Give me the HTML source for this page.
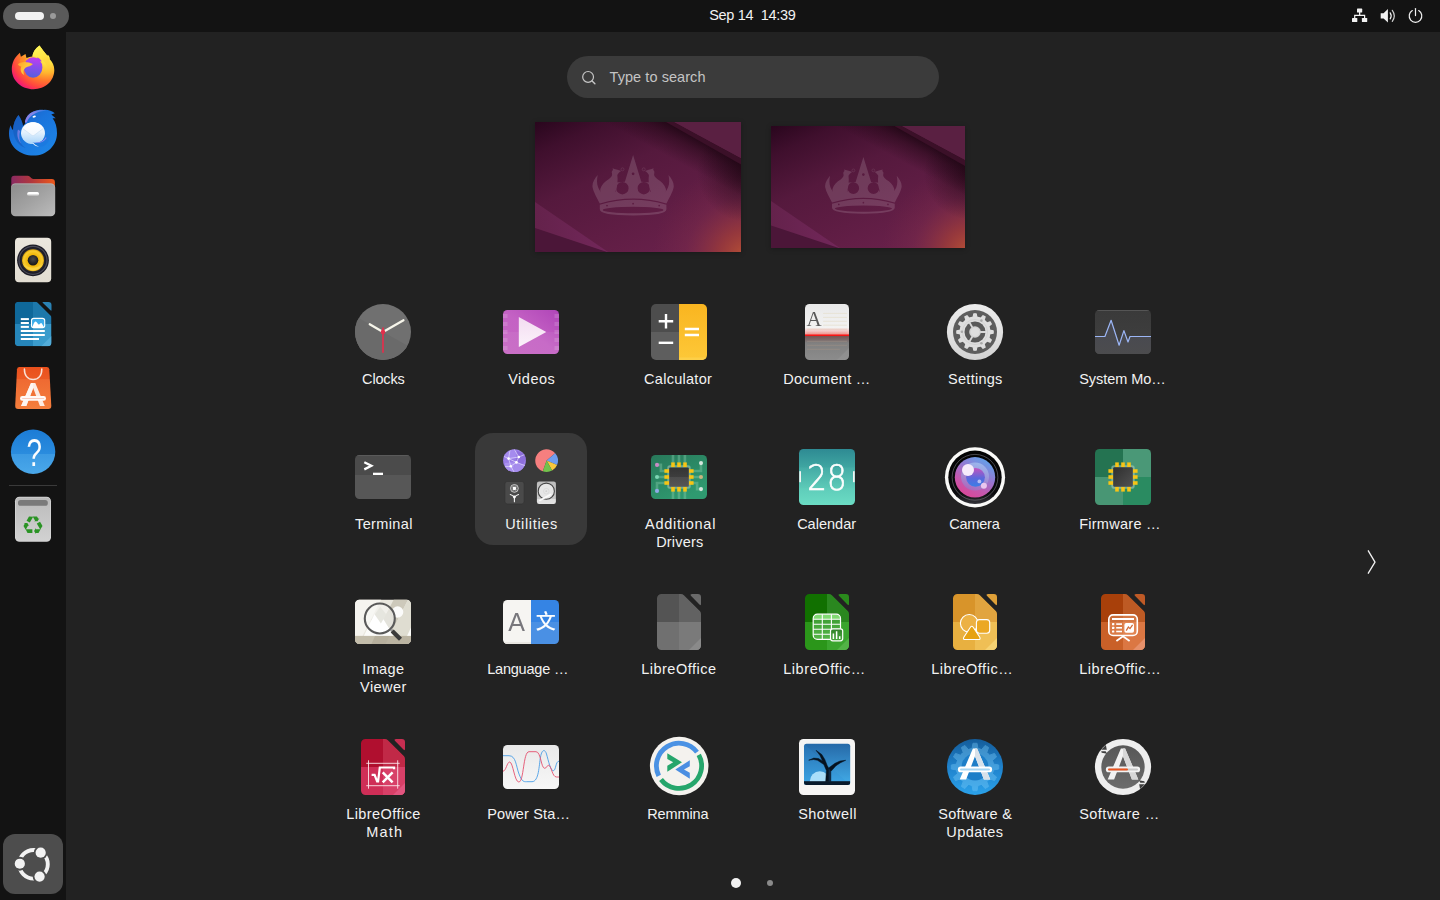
<!DOCTYPE html>
<html lang="en"><head><meta charset="utf-8"><title>Activities</title>
<style>
*{margin:0;padding:0;box-sizing:border-box}
html,body{width:1440px;height:900px;overflow:hidden;background:#222222;font-family:"Liberation Sans","DejaVu Sans",sans-serif;color:#f2f2f2}
#top{position:absolute;left:0;top:0;width:1440px;height:32px;background:#131313}
#dock{position:absolute;left:0;top:32px;width:66px;height:868px;background:#131313}
#act{position:absolute;left:3px;top:3px;width:66px;height:26px;border-radius:13px;background:#5a5a5a}
#act i{position:absolute;left:12px;top:9px;width:29px;height:8px;border-radius:4px;background:#f2f2f2}
#act b{position:absolute;left:47px;top:10px;width:6px;height:6px;border-radius:3px;background:#9a9a9a}
#search{position:absolute;left:567px;top:56px;width:372px;height:42px;border-radius:21px;background:#3b3b3b}
#search svg{position:absolute;left:13px;top:12px}
.ws{position:absolute;overflow:hidden;box-shadow:0 1px 5px rgba(0,0,0,.28)}
.ws svg{display:block}
.ic{position:absolute;width:64px;height:64px}
.ic svg{display:block}
.t{position:absolute;font-size:14.5px;line-height:18px;height:18px;color:#f2f2f2;white-space:pre}
#t_searchtxt{color:#c4c4c4}
#folder{position:absolute;left:475px;top:433px;width:112px;height:112px;border-radius:18px;background:#393939}
.dk{position:absolute;left:9px;width:48px;height:48px}
.dk svg{display:block}
#sep{position:absolute;left:9px;top:485px;width:48px;height:1px;background:#3a3a3a}
#apps{position:absolute;left:3px;top:834px;width:60px;height:60px;border-radius:12px;background:#4d4d4d}
#apps svg{position:absolute;left:0;top:0}
#chev{position:absolute;left:1360px;top:546px}
.dot{position:absolute;border-radius:50%}
.st{position:absolute;top:0}
</style></head>
<body>
<div id="top"><div id="act"><i></i><b></b></div>
<svg class="st" style="left:1340px" width="100" height="32" viewBox="1340 0 100 32">
<g fill="#f2f2f2"><rect x="1357" y="8.600" width="5.200" height="4" rx=".6"/><rect x="1352" y="17.900" width="5.300" height="4.200" rx=".6"/><rect x="1361.900" y="17.900" width="5.300" height="4.200" rx=".6"/>
<path d="M1359 12 H1360.300 V14.700 H1365.200 V18.500 H1364 V15.900 H1355.300 V18.500 H1354.100 V14.700 H1359Z"/>
<path d="M1380.700 13.300 H1383.600 L1387.900 9 V22.500 L1383.600 18.400 H1380.700Z"/></g>
<g fill="none" stroke="#f2f2f2" stroke-width="1.200" stroke-linecap="round"><path d="M1390.200 12.800 Q1392.200 15.800 1390.200 18.800"/><path d="M1392.300 10.300 Q1396.300 15.800 1392.300 21.300" opacity=".85"/>
<path d="M1412.300 10.600 A6.300 6.300 0 1 0 1418.700 10.600"/><path d="M1415.500 8.600 V15.600"/></g>
</svg></div>
<div id="dock">
<div class="dk" style="top:12px"><svg width="48" height="48" viewBox="0 0 48 48">
<defs>
<radialGradient id="ffa" gradientUnits="userSpaceOnUse" cx="38" cy="9" r="44"><stop offset="0" stop-color="#fff654"/><stop offset="0.25" stop-color="#ffe040"/><stop offset="0.45" stop-color="#ffb62e"/><stop offset="0.62" stop-color="#ff7a2c"/><stop offset="0.8" stop-color="#ff4440"/><stop offset="0.92" stop-color="#f4206c"/><stop offset="1" stop-color="#e01492"/></radialGradient>
<linearGradient id="ffb" x1="0.5" y1="0" x2="0.4" y2="1"><stop offset="0" stop-color="#c43cf0"/><stop offset="0.45" stop-color="#8a4cec"/><stop offset="1" stop-color="#5560dc"/></linearGradient>
<linearGradient id="ffc" x1="0" y1="0" x2="1" y2="0.6"><stop offset="0" stop-color="#ffa02a"/><stop offset="0.6" stop-color="#ffc83a"/><stop offset="1" stop-color="#ffb030"/></linearGradient>
<linearGradient id="ffd" x1="0.3" y1="0" x2="0.7" y2="1"><stop offset="0" stop-color="#fff85a"/><stop offset="0.5" stop-color="#ffe444"/><stop offset="1" stop-color="#ffb02e" stop-opacity="0"/></linearGradient>
</defs>
<path d="M30.500 1.600 C33 5 35.500 8.500 38.300 11.800 L38.900 10.800 C40.500 12.500 41 14 40.800 15.200 C43.500 18 45.300 21.500 45.300 26 C45.300 37 36 45.200 24.500 45.200 C12.500 45.200 2.800 36.500 2.800 25.200 C2.800 18.500 5.800 13.200 10.900 8.800 L11.900 12.800 L16.500 10 L17.500 14 C19.500 13.200 21.500 12.700 23.400 12.600 C23.600 8.800 26 4.800 30.500 1.600Z" fill="url(#ffa)"/>
<path d="M30.500 1.600 C33 5 35.500 8.500 38.300 11.800 C41 16 42 21 40 27 C38 21 35 16 29 13.300 C27 12.700 25 12.500 23.400 12.600 C23.600 8.800 26 4.800 30.500 1.600Z" fill="url(#ffd)"/>
<ellipse cx="24.100" cy="23.500" rx="9.300" ry="10.200" fill="url(#ffb)"/>
<path d="M28 13.600 C30.300 14.200 32 15.700 32.800 17.600 C31.500 17 30.200 17 29 17.500Z" fill="#b040ee"/>
<path d="M8.800 20.200 C12 17.300 19 17.200 23.800 20 C22.500 22.300 19 22.200 16.500 23.800 C14.200 25.500 14 28.500 15.300 31.200 C12 29.500 10.800 25.500 12.300 22.600 C10.800 22.100 9.500 21.300 8.800 20.200Z" fill="url(#ffc)"/>
<path d="M12.300 13.800 C14 13.200 16 13.300 17.500 14 C16.300 15 15.500 16.300 15.200 17.500 C13.500 17.300 12 17.700 10.500 18.500 C10.800 16.500 11.300 15 12.300 13.800Z" fill="#ff8a28" opacity=".6"/>
</svg></div>
<div class="dk" style="top:76px"><svg width="48" height="48" viewBox="0 0 48 48">
<defs>
<linearGradient id="tba" x1="0.1" y1="0.1" x2="0.8" y2="0.95"><stop offset="0" stop-color="#1a62c8"/><stop offset="0.4" stop-color="#1a74dc"/><stop offset="1" stop-color="#1d84e6"/></linearGradient>
<linearGradient id="tbb" x1="0" y1="0" x2="0" y2="1"><stop offset="0" stop-color="#ffffff"/><stop offset="0.45" stop-color="#e4f1fd"/><stop offset="1" stop-color="#a9d4f8"/></linearGradient>
<linearGradient id="tbc" x1="0" y1="1" x2="1" y2="0"><stop offset="0" stop-color="#8f7ee6"/><stop offset="0.6" stop-color="#7f86ea"/><stop offset="1" stop-color="#2a7ae0"/></linearGradient>
<linearGradient id="tbd" x1="0" y1="0" x2="0" y2="1"><stop offset="0" stop-color="#ffffff"/><stop offset="1" stop-color="#f2f8fe"/></linearGradient>
</defs>
<path d="M34.600 1.900 C39 1.500 43 3 45.800 5.300 L42.300 6.600 L46.700 10.300 L43.600 10.200 C46.500 14 48 19 48 25 C48 38 37.500 47.600 24.500 47.600 C11 47.600 0 38.500 0 25.500 C0 22 0.600 19.500 1.600 17.200 C2.300 19.500 3 21 4 22 C4.200 16 6.200 10.800 9.400 6.900 C12 10.500 13.500 14 14 18 L16.500 15 L15.900 13.400 C17 9 20 5.500 23.400 4 C27 2.200 31 1.700 34.600 1.900Z" fill="url(#tba)"/>
<path d="M15.900 13.400 C17 9 20 5.500 24 3.800 C28 2 33 1.600 38 2.500 C33 2.900 28.500 4 25.500 5.800 C21.500 8 19 10.800 17.800 14.200 L16.500 15Z" fill="url(#tbc)"/>
<path d="M4 22 C4.200 16 6.200 10.800 9.400 6.900 C12 10.500 13.500 14 14 18 C11 21 9.500 25 10 29.500 C10.500 34 13 37.500 16.500 40 C10 38 5 32 4 22Z" fill="#1558b8" opacity=".55"/>
<path d="M9 21.500 C7.500 26 8.500 31.500 12 35.500 C10 31.500 9.800 27 11.200 23 C10.300 22.600 9.600 22.100 9 21.500Z" fill="#8a86ea" opacity=".75"/>
<ellipse cx="24" cy="25.200" rx="12" ry="10.900" fill="url(#tbb)"/>
<path d="M13.400 20.300 C15.500 16.500 19.500 14.300 24 14.300 C28.500 14.300 32.500 16.500 34.600 20.300 L25 27.400 Q24 28.100 23 27.400Z" fill="url(#tbd)"/>
<path d="M13.400 20.300 L23 27.400 Q24 28.100 25 27.400 L34.600 20.300" fill="none" stroke="#c4dcf4" stroke-width="0.700" opacity=".9"/>
<path d="M37.500 26 C37 31.500 31.500 35.800 23.400 34.500 C26.500 36.500 29.500 38 30.500 38.800 C37 38.500 41.500 33 41 26Z" fill="#1b7ae0"/>
<path d="M36.800 29 C35 33 30 35.400 23.600 34.500 C29.500 36.300 35.300 34 37.500 30Z" fill="#8f88ee"/>
<path d="M23.400 34.500 C26 36.800 28.500 38 30 38.600 C27.500 38.800 24.500 37.500 23.400 34.500Z" fill="#f4f9ff"/>
<ellipse cx="25.200" cy="8.600" rx="1.700" ry="1" fill="#ffffff" transform="rotate(-15 25.200 8.600)"/>
</svg></div>
<div class="dk" style="top:140px"><svg width="48" height="48" viewBox="0 0 48 48">
<defs><linearGradient id="fla" x1="0" y1="0" x2="1" y2="0"><stop offset="0" stop-color="#8a2a62"/><stop offset="0.45" stop-color="#b0363e"/><stop offset="1" stop-color="#ee5a1c"/></linearGradient>
<linearGradient id="flb" x1="0" y1="0" x2="1" y2="1"><stop offset="0" stop-color="#8c8c8c"/><stop offset="0.5" stop-color="#a2a2a2"/><stop offset="1" stop-color="#bcbcbc"/></linearGradient></defs>
<path d="M5.300 3.800 H18.500 Q20 3.800 21 4.800 L22.500 6.300 Q23.300 7 24.500 7 H42.700 Q45.900 7 45.900 10.200 V30 H2.300 V6.800 Q2.300 3.800 5.300 3.800Z" fill="url(#fla)"/>
<rect x="2" y="11.600" width="44.200" height="32.700" rx="4.300" fill="url(#flb)"/>
<path d="M2 15.900 A4.300 4.300 0 0 1 6.300 11.600 H41.900 A4.300 4.300 0 0 1 46.200 15.900 V16.600 A4.300 4.300 0 0 0 41.900 12.300 H6.300 A4.300 4.300 0 0 0 2 16.600Z" fill="#c4c4c4" opacity=".7"/>
<rect x="18.200" y="20" width="11.800" height="3.300" rx="1.650" fill="#ffffff"/>
<rect x="18.200" y="22.300" width="11.800" height="1" rx=".5" fill="#d8d8d8"/>
</svg></div>
<div class="dk" style="top:204px"><svg width="48" height="48" viewBox="0 0 48 48">
<defs><radialGradient id="rba" cx="0.5" cy="0.5" r="0.5"><stop offset="0" stop-color="#f0b400"/><stop offset="0.55" stop-color="#f2b90c"/><stop offset="0.85" stop-color="#f8cc30"/><stop offset="1" stop-color="#d89e08"/></radialGradient>
<radialGradient id="rbb" cx="0.5" cy="0.4" r="0.6"><stop offset="0" stop-color="#4a4a4a"/><stop offset="1" stop-color="#141414"/></radialGradient>
<linearGradient id="rbc" x1="0" y1="0" x2="0" y2="1"><stop offset="0" stop-color="#ebe7de"/><stop offset="1" stop-color="#e2ddd2"/></linearGradient></defs>
<rect x="6" y="1.800" width="36.200" height="44.500" rx="4" fill="url(#rbc)"/>
<circle cx="24" cy="24.300" r="15.900" fill="#1c1c26"/>
<circle cx="24" cy="24.300" r="14" fill="none" stroke="#4a4a58" stroke-width="1.200"/>
<circle cx="24" cy="24.300" r="12.200" fill="#26262e"/>
<circle cx="24" cy="24.300" r="11" fill="url(#rba)"/>
<path d="M13.500 27 A11 11 0 0 0 34.500 27 A12 9 0 0 1 13.500 27Z" fill="#fbd84a" opacity=".7"/>
<circle cx="24" cy="24.300" r="5.300" fill="url(#rbb)"/>
</svg></div>
<div class="dk" style="top:268px"><svg width="48" height="48" viewBox="0 0 48 48">
<defs><clipPath id="wrc"><path d="M9.800 1.800 H26.300 Q27.700 1.800 28.700 2.800 L41.500 15.600 Q42.500 16.600 42.500 18 V42.300 A4 4 0 0 1 38.500 46.300 H9.800 A4 4 0 0 1 5.800 42.300 V5.800 A4 4 0 0 1 9.800 1.800Z"/></clipPath>
<linearGradient id="wri" x1="0" y1="0" x2="0" y2="1"><stop offset="0" stop-color="#38a8e6"/><stop offset="1" stop-color="#45b4ee"/></linearGradient></defs>
<g clip-path="url(#wrc)"><rect x="5.800" y="1.800" width="18.200" height="22.200" fill="#0f689a"/><rect x="24" y="1.800" width="18.500" height="22.200" fill="#1d78ab"/><rect x="5.800" y="24" width="18.200" height="22.300" fill="#2686ba"/><rect x="24" y="24" width="18.500" height="22.300" fill="#3b9ccc"/><path d="M42.500 36 V46.300 H32.200Z" fill="#52acd8"/></g>
<path d="M34.300 1.900 H39.500 A3 3 0 0 1 42.500 4.900 V9.800 Q42.500 11.300 41.500 10.300 L33.700 2.700 Q32.900 1.900 34.300 1.900Z" fill="#2a82b4"/>
<g fill="#ffffff"><rect x="11.800" y="18.100" width="8.100" height="2"/><rect x="11.800" y="22" width="8.100" height="2"/><rect x="11.800" y="25.900" width="8.100" height="2"/><rect x="11.800" y="30" width="24" height="2"/><rect x="11.800" y="34" width="24" height="2"/><rect x="11.800" y="38" width="18.200" height="2"/></g>
<rect x="22.500" y="18.400" width="13.200" height="9.200" rx="2.200" fill="url(#wri)" stroke="#ffffff" stroke-width="1.100"/>
<path d="M23.300 27.300 L24.500 24 Q25.800 21.500 26.600 21.600 Q27.500 21.700 28.500 23.300 Q29.300 24.700 29.900 24.600 Q30.600 24.500 31.200 23.500 Q32 22.600 32.600 23.300 Q33.500 24.300 34.900 27.300Z" fill="#ffffff"/>
</svg></div>
<div class="dk" style="top:332px"><svg width="48" height="48" viewBox="0 0 48 48">
<defs><linearGradient id="aca" x1="0" y1="0" x2="0" y2="1"><stop offset="0" stop-color="#e9501c"/><stop offset="0.29" stop-color="#ec5a24"/><stop offset="0.3" stop-color="#ef6a32"/><stop offset="1" stop-color="#f47e3c"/></linearGradient></defs>
<path d="M10.500 3 H37.700 Q40 3 40.300 5.300 L42.300 41.700 Q42.400 44.900 39.300 44.900 H9.200 Q6.100 44.900 6.200 41.700 L8 5.300 Q8.200 3 10.500 3Z" fill="url(#aca)"/>
<path d="M15.400 4.900 C15.400 11.800 19 15.500 24.100 15.500 C29.200 15.500 32.800 11.800 32.800 4.900" fill="none" stroke="#f9e2d7" stroke-width="1.500" stroke-linecap="round"/>
<path d="M22 19.100 H26.300 L35.800 41.900 H30.900 L24.200 24 L17.300 41.900 H12.100Z" fill="#fcebe2"/>
<path d="M22 19.100 H24.200 V24 L17.300 41.900 H12.100Z" fill="#fef6f2"/>
<rect x="11" y="32.100" width="26" height="4.600" rx="2.300" fill="#fffaf7"/>
<rect x="13" y="33.900" width="22.300" height="0.900" rx=".45" fill="#f7bfae"/>
</svg></div>
<div class="dk" style="top:396px"><svg width="48" height="48" viewBox="0 0 48 48">
<defs><linearGradient id="hpa" x1="0" y1="0" x2="0" y2="1"><stop offset="0" stop-color="#1c7cd6"/><stop offset="0.545" stop-color="#2a8cde"/><stop offset="0.555" stop-color="#3c9ae3"/><stop offset="1" stop-color="#4aa8ea"/></linearGradient></defs>
<circle cx="24.100" cy="23.800" r="22.200" fill="url(#hpa)"/>
<text opacity=".99" transform="translate(25.300 38.100) scale(0.72 1)" x="0" y="0" font-family="Liberation Sans,sans-serif" font-size="38.500" fill="#ffffff" text-anchor="middle">?</text>
</svg></div>
<div class="dk" style="top:463px"><svg width="48" height="48" viewBox="0 0 48 48">
<defs><linearGradient id="tra" x1="0" y1="0" x2="0" y2="1"><stop offset="0" stop-color="#bababa"/><stop offset="1" stop-color="#d2d2d2"/></linearGradient></defs>
<rect x="6" y="1.700" width="36" height="45" rx="4.500" fill="#d8d8d8"/>
<rect x="6.700" y="2.400" width="34.600" height="43.600" rx="3.800" fill="url(#tra)"/>
<rect x="9" y="5" width="29.800" height="5.800" rx="2.600" fill="#7a7a7a"/>
<g transform="translate(24 30.100)" fill="#2a9324">
<g id="rcy"><path d="M-7.400 4.050 H-0.600 V7.800 H-5.500Z"/><path d="M1.100 5.900 L2.800 2.800 V4.050 H7.600 L5.500 7.800 H2.800 V9Z"/></g>
<use href="#rcy" transform="rotate(120)"/><use href="#rcy" transform="rotate(240)"/></g>
</svg></div>
<div id="sep" style="top:453px"></div>
</div>
<div id="apps"><svg width="60" height="60" viewBox="0 0 60 60"><defs><mask id="ubm"><rect width="60" height="60" fill="#fff"/><circle cx="37.68" cy="18.63" r="6.900" fill="#000"/><circle cx="36.59" cy="42.57" r="6.900" fill="#000"/><circle cx="16.81" cy="29.73" r="6.900" fill="#000"/></mask></defs><circle cx="30.50" cy="30.30" r="14.30" fill="none" stroke="#f2f2f2" stroke-width="3.900" mask="url(#ubm)"/><circle cx="37.68" cy="18.63" r="5.100" fill="#f2f2f2"/><circle cx="36.59" cy="42.57" r="5.100" fill="#f2f2f2"/><circle cx="16.81" cy="29.73" r="5.100" fill="#f2f2f2"/></svg></div>
<div id="search"><svg width="18" height="18" viewBox="0 0 18 18"><circle cx="8.100" cy="8.900" r="5.400" fill="none" stroke="#c6c6c6" stroke-width="1.200"/><path d="M12.100 12.900 L14.900 15.700" stroke="#c6c6c6" stroke-width="1.400" stroke-linecap="round"/></svg></div>
<div class="ws" style="left:535px;top:122px;width:206px;height:130px"><svg width="206" height="130" viewBox="0 0 206 130" preserveAspectRatio="none">
<defs><linearGradient id="wa1" x1="0" y1="0" x2="0.75" y2="1"><stop offset="0" stop-color="#29061d"/><stop offset="0.16" stop-color="#3f0f2d"/><stop offset="0.42" stop-color="#55193d"/><stop offset="1" stop-color="#69214b"/></linearGradient>
<radialGradient id="wb1" gradientUnits="userSpaceOnUse" cx="212" cy="136" r="95"><stop offset="0" stop-color="#bd5534"/><stop offset="0.3" stop-color="#a23e38" stop-opacity=".75"/><stop offset="0.65" stop-color="#85304a" stop-opacity=".3"/><stop offset="1" stop-color="#7a2846" stop-opacity="0"/></radialGradient>
<linearGradient id="wc1" gradientUnits="userSpaceOnUse" x1="170" y1="21" x2="156" y2="47"><stop offset="0" stop-color="#1e0613" stop-opacity=".85"/><stop offset="0.35" stop-color="#220715" stop-opacity=".5"/><stop offset="1" stop-color="#260818" stop-opacity="0"/></linearGradient>
<radialGradient id="we1" gradientUnits="userSpaceOnUse" cx="212" cy="50" r="50"><stop offset="0" stop-color="#1e0613" stop-opacity=".7"/><stop offset="1" stop-color="#1e0613" stop-opacity="0"/></radialGradient>
<linearGradient id="wd1" x1="0" y1="0" x2="1" y2="0"><stop offset="0" stop-color="#64224b"/><stop offset="1" stop-color="#72275a"/></linearGradient></defs>
<rect width="206" height="130" fill="url(#wa1)"/>
<rect width="206" height="130" fill="url(#wb1)"/>
<path d="M40 0 H139 L206 36.300 V120 H40Z" fill="url(#wc1)"/>
<path d="M139 0 L206 36.300 V110 L150 110Z" fill="url(#we1)"/>
<path d="M131 0 H139 L206 36.300 V42.500Z" fill="#3b1028"/>
<path d="M139 0 H206 V36.300Z" fill="#5a2042"/>
<path d="M0 80 L73 130 H0Z" fill="url(#wd1)"/>
<path d="M0 106 L72 130 H0Z" fill="#4b1638"/>
<g fill="#ffffff" opacity=".14">
<path d="M62.700 53.100 C59.500 57 56.800 61 57.600 65.500 C58.500 70 62 76 64.800 81.500 Q98.100 71.500 131.400 81.500 C134.200 76 137.700 70 138.600 65.500 C139.400 61 136.700 57 133.500 53.100 C134.500 58 134.500 62 133 65.500 C131.500 69 129 72 126.500 73.500 L69.700 73.500 C67 72 64.600 69 63.200 65.500 C61.700 62 61.700 58 62.700 53.100Z"/>
<path fill-rule="evenodd" d="M98.100 32.900 L106.300 59.700 L115 60.500 V74 H81 V60.500 L89.900 59.700Z M93.600 66.200 A6.200 6.200 0 1 0 81.200 66.200 A6.200 6.200 0 1 0 93.600 66.200Z M115 66.200 A6.200 6.200 0 1 0 102.600 66.200 A6.200 6.200 0 1 0 115 66.200Z M99.500 51.800 A1.400 1.400 0 1 0 96.700 51.800 A1.400 1.400 0 1 0 99.500 51.800Z"/>
<g id="nb1"><path d="M86.200 49 L82.500 47.800 L79.500 47 L77.600 46.300 L78 48 C76.800 48.800 76.500 50 77 51.500 C77.500 53.500 76.500 55 74 57 C70 59.500 66.500 62.500 65.300 67 C64.800 70 66 72.500 69 74 H83 C83.500 72.500 82.500 70.500 80.500 69.500 C82.500 65 83 58 82.300 53 C83 51.500 84.500 50 86.200 49Z"/><circle cx="87.500" cy="47.300" r="1.500" fill="none" stroke="#ffffff" stroke-width="0.600"/></g>
<use href="#nb1" transform="translate(196.200 0) scale(-1 1)"/>
<path fill-rule="evenodd" d="M64.800 82.800 Q98.100 72.800 131.400 82.800 L131.400 87.200 Q131.400 93.400 98.100 93.400 Q64.800 93.400 64.800 87.200Z M67.700 88 A30.400 3.300 0 1 0 128.500 88 A30.400 3.300 0 1 0 67.700 88Z M99 81.700 A0.900 0.900 0 1 0 97.200 81.700 A0.900 0.900 0 1 0 99 81.700Z M72.900 83.600 A0.900 0.900 0 1 0 71.100 83.600 A0.900 0.900 0 1 0 72.900 83.600Z M125.100 83.600 A0.900 0.900 0 1 0 123.300 83.600 A0.900 0.900 0 1 0 125.100 83.600Z"/>
</g></svg></div>
<div class="ws" style="left:771px;top:126px;width:194px;height:122px"><svg width="194" height="122" viewBox="0 0 206 130" preserveAspectRatio="none">
<defs><linearGradient id="wa2" x1="0" y1="0" x2="0.75" y2="1"><stop offset="0" stop-color="#29061d"/><stop offset="0.16" stop-color="#3f0f2d"/><stop offset="0.42" stop-color="#55193d"/><stop offset="1" stop-color="#69214b"/></linearGradient>
<radialGradient id="wb2" gradientUnits="userSpaceOnUse" cx="212" cy="136" r="95"><stop offset="0" stop-color="#bd5534"/><stop offset="0.3" stop-color="#a23e38" stop-opacity=".75"/><stop offset="0.65" stop-color="#85304a" stop-opacity=".3"/><stop offset="1" stop-color="#7a2846" stop-opacity="0"/></radialGradient>
<linearGradient id="wc2" gradientUnits="userSpaceOnUse" x1="170" y1="21" x2="156" y2="47"><stop offset="0" stop-color="#1e0613" stop-opacity=".85"/><stop offset="0.35" stop-color="#220715" stop-opacity=".5"/><stop offset="1" stop-color="#260818" stop-opacity="0"/></linearGradient>
<radialGradient id="we2" gradientUnits="userSpaceOnUse" cx="212" cy="50" r="50"><stop offset="0" stop-color="#1e0613" stop-opacity=".7"/><stop offset="1" stop-color="#1e0613" stop-opacity="0"/></radialGradient>
<linearGradient id="wd2" x1="0" y1="0" x2="1" y2="0"><stop offset="0" stop-color="#64224b"/><stop offset="1" stop-color="#72275a"/></linearGradient></defs>
<rect width="206" height="130" fill="url(#wa2)"/>
<rect width="206" height="130" fill="url(#wb2)"/>
<path d="M40 0 H139 L206 36.300 V120 H40Z" fill="url(#wc2)"/>
<path d="M139 0 L206 36.300 V110 L150 110Z" fill="url(#we2)"/>
<path d="M131 0 H139 L206 36.300 V42.500Z" fill="#3b1028"/>
<path d="M139 0 H206 V36.300Z" fill="#5a2042"/>
<path d="M0 80 L73 130 H0Z" fill="url(#wd2)"/>
<path d="M0 106 L72 130 H0Z" fill="#4b1638"/>
<g fill="#ffffff" opacity=".14">
<path d="M62.700 53.100 C59.500 57 56.800 61 57.600 65.500 C58.500 70 62 76 64.800 81.500 Q98.100 71.500 131.400 81.500 C134.200 76 137.700 70 138.600 65.500 C139.400 61 136.700 57 133.500 53.100 C134.500 58 134.500 62 133 65.500 C131.500 69 129 72 126.500 73.500 L69.700 73.500 C67 72 64.600 69 63.200 65.500 C61.700 62 61.700 58 62.700 53.100Z"/>
<path fill-rule="evenodd" d="M98.100 32.900 L106.300 59.700 L115 60.500 V74 H81 V60.500 L89.900 59.700Z M93.600 66.200 A6.200 6.200 0 1 0 81.200 66.200 A6.200 6.200 0 1 0 93.600 66.200Z M115 66.200 A6.200 6.200 0 1 0 102.600 66.200 A6.200 6.200 0 1 0 115 66.200Z M99.500 51.800 A1.400 1.400 0 1 0 96.700 51.800 A1.400 1.400 0 1 0 99.500 51.800Z"/>
<g id="nb2"><path d="M86.200 49 L82.500 47.800 L79.500 47 L77.600 46.300 L78 48 C76.800 48.800 76.500 50 77 51.500 C77.500 53.500 76.500 55 74 57 C70 59.500 66.500 62.500 65.300 67 C64.800 70 66 72.500 69 74 H83 C83.500 72.500 82.500 70.500 80.500 69.500 C82.500 65 83 58 82.300 53 C83 51.500 84.500 50 86.200 49Z"/><circle cx="87.500" cy="47.300" r="1.500" fill="none" stroke="#ffffff" stroke-width="0.600"/></g>
<use href="#nb2" transform="translate(196.200 0) scale(-1 1)"/>
<path fill-rule="evenodd" d="M64.800 82.800 Q98.100 72.800 131.400 82.800 L131.400 87.200 Q131.400 93.400 98.100 93.400 Q64.800 93.400 64.800 87.200Z M67.700 88 A30.400 3.300 0 1 0 128.500 88 A30.400 3.300 0 1 0 67.700 88Z M99 81.700 A0.900 0.900 0 1 0 97.200 81.700 A0.900 0.900 0 1 0 99 81.700Z M72.900 83.600 A0.900 0.900 0 1 0 71.100 83.600 A0.900 0.900 0 1 0 72.900 83.600Z M125.100 83.600 A0.900 0.900 0 1 0 123.300 83.600 A0.900 0.900 0 1 0 125.100 83.600Z"/>
</g></svg></div>
<div id="folder"></div>
<div class="ic" style="left:351px;top:300px"><svg width="64" height="64" viewBox="0 0 64 64">
<defs><clipPath id="ckc"><circle cx="32" cy="32" r="28"/></clipPath></defs>
<circle cx="32" cy="32" r="28" fill="#707070"/>
<path clip-path="url(#ckc)" d="M4 16 L64 50 L64 64 L0 64 L0 16Z" fill="#6a6a6a"/>
<path d="M32 32 L18.700 24.200" stroke="#f6f5ea" stroke-width="2.200" stroke-linecap="round"/>
<path d="M32 32 L52.500 20.200" stroke="#f6f5ea" stroke-width="2.200" stroke-linecap="round"/>
<path d="M32 27.500 L32 52.800" stroke="#e22f4c" stroke-width="1.700" stroke-linecap="butt"/>
<circle cx="32" cy="32" r="2.300" fill="#e22f4c"/>
</svg></div>
<div class="ic" style="left:499px;top:300px"><svg width="64" height="64" viewBox="0 0 64 64">
<defs><linearGradient id="vdg" x1="0" y1="1" x2="1" y2="0"><stop offset="0" stop-color="#c767c3"/><stop offset="0.5" stop-color="#c462c4"/><stop offset="1" stop-color="#b045b8"/></linearGradient>
<linearGradient id="vdp" x1="0" y1="0" x2="0" y2="1"><stop offset="0" stop-color="#f3dcf1"/><stop offset="1" stop-color="#fbf2fa"/></linearGradient></defs>
<rect x="4" y="10" width="56" height="44" rx="4.500" fill="url(#vdg)"/>
<path d="M4 32 H60 V49.500 A4.500 4.500 0 0 1 55.500 54 H8.500 A4.500 4.500 0 0 1 4 49.500Z" fill="#ffffff" opacity="0.06"/>
<g fill="#ffffff" opacity="0.15"><rect x="4" y="14" width="4.500" height="4"/><rect x="4" y="22" width="4.500" height="4"/><rect x="4" y="30" width="4.500" height="4"/><rect x="4" y="38" width="4.500" height="4"/><rect x="4" y="46" width="4.500" height="4"/>
<rect x="55.500" y="14" width="4.500" height="4"/><rect x="55.500" y="22" width="4.500" height="4"/><rect x="55.500" y="30" width="4.500" height="4"/><rect x="55.500" y="38" width="4.500" height="4"/><rect x="55.500" y="46" width="4.500" height="4"/></g>
<path d="M19.800 17 L47.300 32 L19.800 47Z" fill="url(#vdp)"/>
</svg></div>
<div class="ic" style="left:647px;top:300px"><svg width="64" height="64" viewBox="0 0 64 64">
<defs><clipPath id="clc"><rect x="4" y="4" width="56" height="56" rx="5"/></clipPath>
<linearGradient id="cly" x1="0" y1="0" x2="0" y2="1"><stop offset="0" stop-color="#f9b520"/><stop offset="1" stop-color="#fdc838"/></linearGradient></defs>
<g clip-path="url(#clc)"><rect x="4" y="4" width="28" height="28" fill="#4d4d4d"/><rect x="4" y="32" width="28" height="28" fill="#5e5e5e"/><rect x="32" y="4" width="28" height="56" fill="url(#cly)"/>
<rect x="32" y="57.500" width="28" height="2.500" fill="#fdcf48"/></g>
<g stroke="#ffffff" stroke-width="2.4" fill="none"><path d="M11.700 21.200 H26.200 M19 14 V28.500"/><path d="M11.700 42.800 H26.200"/><path d="M37.800 29 H52 M37.800 35 H52"/></g>
</svg></div>
<div class="ic" style="left:795px;top:300px"><svg width="64" height="64" viewBox="0 0 64 64">
<defs><clipPath id="dsc"><rect x="10" y="4" width="44" height="56" rx="4.500"/></clipPath>
<linearGradient id="dsr" x1="0" y1="0" x2="0" y2="1"><stop offset="0" stop-color="#f04040" stop-opacity="0"/><stop offset="1" stop-color="#f04444" stop-opacity="0.55"/></linearGradient>
<linearGradient id="dsk" x1="0" y1="0" x2="0" y2="1"><stop offset="0" stop-color="#7c4e4e"/><stop offset="0.12" stop-color="#7a6262"/><stop offset="0.3" stop-color="#808080"/><stop offset="1" stop-color="#8c8c8c"/></linearGradient>
<linearGradient id="dsw" x1="0" y1="0" x2="0" y2="1"><stop offset="0" stop-color="#e9e9e9"/><stop offset="1" stop-color="#f6f6f5"/></linearGradient></defs>
<g clip-path="url(#dsc)"><rect x="10" y="4" width="44" height="32" fill="url(#dsw)"/>
<g stroke="#e6dfcf" stroke-width="0.800"><path d="M28.100 13.400 H51.900 M28.100 17.400 H51.900 M28.100 21.300 H51.900 M28.100 25.200 H51.900 M12.100 29.200 H51.900 M12.100 33.100 H51.900"/></g>
<rect x="10" y="27.500" width="44" height="7.500" fill="url(#dsr)"/>
<rect x="10" y="35.500" width="44" height="24.500" fill="url(#dsk)"/>
<path d="M54 48 V60 H42Z" fill="#989898" opacity=".5"/>
<g stroke="#9d9185" stroke-width="0.700" opacity=".85"><path d="M12.100 41.300 H51.900 M12.100 45.300 H51.900 M12.100 49.300 H44.800"/></g>
<rect x="10" y="34.500" width="44" height="1.400" fill="#fb0707"/></g>
<text opacity=".99" x="19.050" y="26" font-family="Liberation Serif,serif" font-size="21" fill="#585858" text-anchor="middle">A</text>
</svg></div>
<div class="ic" style="left:943px;top:300px"><svg width="64" height="64" viewBox="0 0 64 64">
<defs><linearGradient id="stg" x1="0" y1="0" x2="0" y2="1"><stop offset="0" stop-color="#ececec"/><stop offset="0.5" stop-color="#e2e2e2"/><stop offset="1" stop-color="#d2d2d2"/></linearGradient>
<radialGradient id="sth" cx="0.5" cy="0.5" r="0.5"><stop offset="0" stop-color="#525252"/><stop offset="1" stop-color="#5e5e5e"/></radialGradient></defs>
<circle cx="32" cy="32" r="28.100" fill="url(#stg)"/>
<circle cx="32" cy="32" r="22" fill="url(#sth)"/>
<path d="M46.68 30.08 L50.16 30.76 L50.16 33.24 L46.68 33.92 L45.67 37.68 L48.34 40.01 L47.11 42.15 L43.75 41.00 L41.00 43.75 L42.15 47.11 L40.01 48.34 L37.68 45.67 L33.92 46.68 L33.24 50.16 L30.76 50.16 L30.08 46.68 L26.32 45.67 L23.99 48.34 L21.85 47.11 L23.00 43.75 L20.25 41.00 L16.89 42.15 L15.66 40.01 L18.33 37.68 L17.32 33.92 L13.84 33.24 L13.84 30.76 L17.32 30.08 L18.33 26.32 L15.66 23.99 L16.89 21.85 L20.25 23.00 L23.00 20.25 L21.85 16.89 L23.99 15.66 L26.32 18.33 L30.08 17.32 L30.76 13.84 L33.24 13.84 L33.92 17.32 L37.68 18.33 L40.01 15.66 L42.15 16.89 L41.00 20.25 L43.75 23.00 L47.11 21.85 L48.34 23.99 L45.67 26.32Z" fill="#dedede" stroke="#dedede" stroke-width="1.20" stroke-linejoin="round" />
<circle cx="32" cy="32" r="15.400" fill="#dedede"/>
<circle cx="32" cy="32" r="12.600" fill="none" stroke="#cfcfcf" stroke-width="0.800"/>
<circle cx="32" cy="32" r="10.500" fill="#5a5a5a"/>
<g stroke="#d8d8d8" stroke-width="1.800"><path d="M32 32 L43 32 M32 32 L26.500 22.470 M32 32 L26.500 41.530"/></g>
<circle cx="32" cy="32" r="5.800" fill="#d4d4d4"/><circle cx="32" cy="32" r="4.300" fill="#dedede"/>
<g fill="#a9a9a9"><circle cx="38.400" cy="20.600" r="1.300"/><circle cx="38.400" cy="43.300" r="1.300"/><circle cx="18.900" cy="31.800" r="1.300"/></g>
</svg></div>
<div class="ic" style="left:1091px;top:300px"><svg width="64" height="64" viewBox="0 0 64 64">
<defs><linearGradient id="smg" x1="0" y1="0" x2="0" y2="1"><stop offset="0" stop-color="#3a3a3a"/><stop offset="1" stop-color="#404040"/></linearGradient>
<linearGradient id="smf" x1="0" y1="0" x2="0" y2="1"><stop offset="0" stop-color="#464852"/><stop offset="1" stop-color="#4c4c4e"/></linearGradient>
<clipPath id="smc"><rect x="4" y="10" width="56" height="44" rx="4.500"/></clipPath></defs>
<rect x="4" y="10" width="56" height="44" rx="4.500" fill="url(#smg)"/>
<g clip-path="url(#smc)"><path d="M4 36.500 H13.900 L20.100 20.300 L28.100 45.200 L32.900 30.600 L37 42 L39 36.500 H60 V54 H4Z" fill="url(#smf)"/><rect x="4" y="10" width="56" height="0.900" fill="#585858"/></g>
<path d="M4 36.500 H13.900 L20.100 20.300 L28.100 45.200 L32.900 30.600 L37 42 L39 36.500 H60" fill="none" stroke="#9cb6f6" stroke-width="1.200" stroke-linejoin="round"/>
</svg></div>
<div class="ic" style="left:351px;top:445px"><svg width="64" height="64" viewBox="0 0 64 64">
<defs><clipPath id="tmc"><rect x="4" y="10" width="56" height="44" rx="4.500"/></clipPath></defs>
<g clip-path="url(#tmc)"><rect x="4" y="10" width="56" height="20" fill="#4b4b4b"/><rect x="4" y="30" width="56" height="24" fill="#575757"/><rect x="4" y="10" width="56" height="0.800" fill="#5e5e5e"/></g>
<path d="M13.300 17.200 L20.400 20.800 L13.300 24.400" fill="none" stroke="#ffffff" stroke-width="2.300"/>
<rect x="22" y="27.700" width="10" height="2.300" fill="#ffffff"/>
</svg></div>
<div class="ic" style="left:499px;top:445px"><svg width="64" height="64" viewBox="0 0 64 64">
<defs><clipPath id="utg"><circle cx="15.500" cy="15.600" r="11.400"/></clipPath>
<linearGradient id="utd" x1="0" y1="0" x2="0" y2="1"><stop offset="0" stop-color="#bdbdbd"/><stop offset="0.78" stop-color="#c8c8c8"/><stop offset="0.8" stop-color="#e0e0e0"/><stop offset="1" stop-color="#e4e4e4"/></linearGradient></defs>
<circle cx="15.500" cy="15.600" r="11.400" fill="#9a7ee6"/>
<g clip-path="url(#utg)"><path d="M4 10 L14 4 L20 12 L9 15Z" fill="#a78ef0" opacity=".8"/><path d="M18 6 L28 10 L24 20 L17 16Z" fill="#8a6ad8" opacity=".8"/><path d="M6 18 L17 17 L13 27 L6 25Z" fill="#b09af2" opacity=".7"/><path d="M17 18 L27 20 L22 27 L13 27Z" fill="#a890ee" opacity=".8"/>
<g stroke="#e9e2ff" stroke-width="0.700" opacity=".9" fill="none"><path d="M9.600 13.600 L19.800 12 L17.400 17.400 L11.800 21.200 Z M9.600 13.600 L17.400 17.400 M19.800 12 L27 9 M19.800 12 L15 4 M17.400 17.400 L27 21 M11.800 21.200 L15 27 M9.600 13.600 L4 11 M11.800 21.200 L4 22 M9.600 13.600 L11 5"/></g></g>
<g fill="#ffffff"><circle cx="9.600" cy="13.600" r="1.300"/><circle cx="19.800" cy="12" r="1.300"/><circle cx="17.400" cy="17.400" r="1.400"/><circle cx="11.800" cy="21.200" r="1.300"/></g>
<path d="M47.60 15.60 L43.81 26.30 A11.35 11.35 0 1 1 56.17 8.15 Z" fill="#f67f7f"/><path d="M47.60 15.60 L56.17 8.15 A11.35 11.35 0 0 1 58.08 19.96 Z" fill="#6f9df0"/><path d="M47.60 15.60 L58.08 19.96 A11.35 11.35 0 0 1 53.10 25.53 Z" fill="#f8c83e"/><path d="M47.60 15.60 L53.10 25.53 A11.35 11.35 0 0 1 43.81 26.30 Z" fill="#74c24c"/>
<rect x="6" y="36.500" width="19" height="22.400" rx="2.200" fill="#4a4a4a" stroke="#323232" stroke-width="0.600"/>
<circle cx="15.400" cy="43.400" r="3.900" fill="none" stroke="#e8e8e8" stroke-width="0.800"/><rect x="13.800" y="41.800" width="3.200" height="3.200" rx="0.800" fill="#ffffff"/>
<circle cx="15.400" cy="43.400" r="2.600" fill="none" stroke="#bdbdbd" stroke-width="0.600"/>
<path d="M11.300 49.600 Q13 50.200 15.400 52 Q17.800 50.200 19.500 49.600 M15.400 52 V56.800" stroke="#f4f4f4" stroke-width="1.100" fill="none" stroke-linecap="round"/><circle cx="15.400" cy="52" r="1.400" fill="#ffffff"/>
<rect x="37.900" y="36.500" width="19" height="22.400" rx="2.200" fill="url(#utd)"/>
<circle cx="47.300" cy="46.200" r="8.100" fill="#e6e6e6" stroke="#454545" stroke-width="1.100"/>
<circle cx="47.300" cy="46.200" r="2.800" fill="none" stroke="#d4d4d4" stroke-width="0.600"/><circle cx="47.300" cy="46.200" r="0.900" fill="#d0d0d0"/>
<path d="M40.800 55.400 L51.600 49.400" stroke="#fafafa" stroke-width="1.700" stroke-linecap="round"/>
</svg></div>
<div class="ic" style="left:647px;top:445px"><svg width="64" height="64" viewBox="0 0 64 64">
<defs><linearGradient id="drg" x1="0" y1="0" x2="0.6" y2="1"><stop offset="0" stop-color="#28785a"/><stop offset="1" stop-color="#2f9a70"/></linearGradient>
<linearGradient id="chp" x1="0" y1="0" x2="0" y2="1"><stop offset="0" stop-color="#343434"/><stop offset="0.49" stop-color="#3e3e3e"/><stop offset="0.5" stop-color="#4c4c4c"/><stop offset="1" stop-color="#565656"/></linearGradient>
<clipPath id="drc"><rect x="4" y="10" width="56" height="44" rx="4.500"/></clipPath></defs>
<rect x="4" y="10" width="56" height="44" rx="4.500" fill="url(#drg)"/>
<g clip-path="url(#drc)" stroke="#8fd0b0" stroke-width="2.600" fill="none" opacity=".38">
<path d="M26 10 V18 M32 10 V18 M37.900 10 V18 M26 46 V54 M32 46 V54 M37.900 46 V54"/>
<path d="M10 19.900 H13.900 V26 H18 M10 32 H18 M10 45.900 V38 H18 M54 18.100 V26 H46 M54 32 H46 M46 38 H50.100 V44.100 H54"/></g>
<rect x="20.300" y="20.300" width="23.400" height="23.400" rx="2.500" fill="#9cc4b4" opacity=".62"/>
<rect x="24.20" y="17.40" width="3.60" height="4.80" fill="#f7c414"/><rect x="24.20" y="41.80" width="3.60" height="4.80" fill="#f7c414"/><rect x="17.40" y="24.20" width="4.80" height="3.60" fill="#f7c414"/><rect x="41.80" y="24.20" width="4.80" height="3.60" fill="#f7c414"/><rect x="30.20" y="17.40" width="3.60" height="4.80" fill="#f7c414"/><rect x="30.20" y="41.80" width="3.60" height="4.80" fill="#f7c414"/><rect x="17.40" y="30.20" width="4.80" height="3.60" fill="#f7c414"/><rect x="41.80" y="30.20" width="4.80" height="3.60" fill="#f7c414"/><rect x="36.20" y="17.40" width="3.60" height="4.80" fill="#f7c414"/><rect x="36.20" y="41.80" width="3.60" height="4.80" fill="#f7c414"/><rect x="17.40" y="36.20" width="4.80" height="3.60" fill="#f7c414"/><rect x="41.80" y="36.20" width="4.80" height="3.60" fill="#f7c414"/>
<rect x="22.200" y="22.600" width="19.600" height="19.100" rx="0.800" fill="url(#chp)"/>
<circle cx="10" cy="19.900" r="2.050" fill="#c98cc6"/><circle cx="10" cy="32" r="2.050" fill="#7ed6b4"/><circle cx="10" cy="45.900" r="2.050" fill="#90aae8"/>
<circle cx="54" cy="18.100" r="2.050" fill="#d6e6de"/><circle cx="54" cy="32" r="2.050" fill="#c9b480"/><circle cx="54" cy="44.100" r="2.050" fill="#d6e6de"/>
</svg></div>
<div class="ic" style="left:795px;top:445px"><svg width="64" height="64" viewBox="0 0 64 64">
<defs><linearGradient id="cag" x1="0" y1="0" x2="0" y2="1"><stop offset="0" stop-color="#2e8a93"/><stop offset="0.32" stop-color="#3fa5a1"/><stop offset="0.34" stop-color="#45aca6"/><stop offset="0.69" stop-color="#5cc9b7"/><stop offset="0.71" stop-color="#5fcdba"/><stop offset="1" stop-color="#6bdcc4"/></linearGradient></defs>
<rect x="4" y="4" width="56" height="56" rx="4.500" fill="url(#cag)"/>
<rect x="4.300" y="26.200" width="1.700" height="11" fill="#f4f4f4"/><rect x="58" y="26.200" width="1.700" height="11" fill="#f4f4f4"/>
<text opacity=".99" x="32" y="45.400" font-family="DejaVu Sans Light,DejaVu Sans,sans-serif" font-weight="200" font-size="36" fill="#ffffff" stroke="#ffffff" stroke-width="0.700" text-anchor="middle" textLength="39.300" lengthAdjust="spacingAndGlyphs">28</text>
</svg></div>
<div class="ic" style="left:943px;top:445px"><svg width="64" height="64" viewBox="0 0 64 64">
<defs><linearGradient id="cmg" x1="0.85" y1="0.1" x2="0.35" y2="0.95"><stop offset="0" stop-color="#62a2ea"/><stop offset="0.4" stop-color="#9478d2"/><stop offset="0.75" stop-color="#c458ae"/><stop offset="1" stop-color="#d64a9c"/></linearGradient>
<linearGradient id="cmi" x1="0.7" y1="0" x2="0.4" y2="1"><stop offset="0" stop-color="#a4c4f2"/><stop offset="1" stop-color="#a070c4"/></linearGradient>
<linearGradient id="cmk" x1="0.5" y1="0" x2="0.5" y2="1"><stop offset="0" stop-color="#c452be"/><stop offset="0.55" stop-color="#5a68dc"/><stop offset="1" stop-color="#3c7ee6"/></linearGradient>
<linearGradient id="cmb" x1="0" y1="0" x2="0" y2="1"><stop offset="0" stop-color="#020202"/><stop offset="0.8" stop-color="#0a0a0c"/><stop offset="1" stop-color="#34343a"/></linearGradient></defs>
<circle cx="32" cy="32.300" r="30.100" fill="#fafaf8"/>
<circle cx="32" cy="32.300" r="26.700" fill="url(#cmb)"/>
<circle cx="32" cy="32.300" r="22.900" fill="none" stroke="#77777e" stroke-width="0.600"/>
<circle cx="32" cy="32.300" r="20.200" fill="url(#cmg)"/>
<circle cx="32" cy="31.600" r="14" fill="url(#cmi)" opacity=".78"/>
<circle cx="32.500" cy="32.300" r="9.400" fill="url(#cmk)"/>
<circle cx="25" cy="25" r="6" fill="#f6eafb"/>
<circle cx="40.900" cy="40.800" r="3" fill="#e9c6ee"/>
<circle cx="36.400" cy="36.400" r="1.900" fill="#b4bef4"/>
</svg></div>
<div class="ic" style="left:1091px;top:445px"><svg width="64" height="64" viewBox="0 0 64 64">
<defs><clipPath id="fwc"><rect x="4" y="4" width="56" height="56" rx="4.500"/></clipPath>
<linearGradient id="chq" x1="0" y1="0" x2="1" y2="1"><stop offset="0" stop-color="#2e2e2e"/><stop offset="1" stop-color="#525252"/></linearGradient></defs>
<g clip-path="url(#fwc)"><rect x="4" y="4" width="28" height="28" fill="#247351"/><rect x="32" y="4" width="28" height="28" fill="#4a9877"/><rect x="4" y="32" width="28" height="28" fill="#489674"/><rect x="32" y="32" width="28" height="28" fill="#2a8b61"/></g>
<rect x="20.300" y="20.300" width="23.400" height="23.400" rx="2.800" fill="#a4c8ba" opacity=".62"/>
<rect x="24.20" y="17.40" width="3.60" height="4.80" fill="#f7c416"/><rect x="24.20" y="41.80" width="3.60" height="4.80" fill="#f7c416"/><rect x="17.40" y="24.20" width="4.80" height="3.60" fill="#f7c416"/><rect x="41.80" y="24.20" width="4.80" height="3.60" fill="#f7c416"/><rect x="30.20" y="17.40" width="3.60" height="4.80" fill="#f7c416"/><rect x="30.20" y="41.80" width="3.60" height="4.80" fill="#f7c416"/><rect x="17.40" y="30.20" width="4.80" height="3.60" fill="#f7c416"/><rect x="41.80" y="30.20" width="4.80" height="3.60" fill="#f7c416"/><rect x="36.20" y="17.40" width="3.60" height="4.80" fill="#f7c416"/><rect x="36.20" y="41.80" width="3.60" height="4.80" fill="#f7c416"/><rect x="17.40" y="36.20" width="4.80" height="3.60" fill="#f7c416"/><rect x="41.80" y="36.20" width="4.80" height="3.60" fill="#f7c416"/>
<rect x="22.200" y="22.300" width="19.600" height="19.400" rx="1.200" fill="url(#chq)"/>
</svg></div>
<div class="ic" style="left:351px;top:590px"><svg width="64" height="64" viewBox="0 0 64 64">
<defs><clipPath id="ivc"><rect x="4" y="9.700" width="56" height="44.300" rx="4.500"/></clipPath><clipPath id="ivm"><circle cx="28.800" cy="28.500" r="15"/></clipPath></defs>
<g clip-path="url(#ivc)"><rect x="4" y="9" width="56" height="46" fill="#e9e7de"/>
<path d="M4 9 H30.400 L11.500 46 H4Z" fill="#f5f4ef"/>
<path d="M43 9 H57.400 L38.500 46 H24Z" fill="#cdc9bb"/>
<path d="M57.400 9 H60 V46 H38.500Z" fill="#dfddd1"/>
<path d="M12.800 46 L23.500 24.200 L29.900 33.400 L32.400 29.200 L42.700 46Z" fill="#fbfbf9"/>
<path d="M56 46 L60 37.500 V46Z" fill="#fbfbf9"/>
<circle cx="46.600" cy="22" r="5.700" fill="#fbfbfa"/>
<rect x="4" y="45.900" width="56" height="9" fill="#b6af9d"/><path d="M4 45.900 H24 L20 55 H4Z" fill="#c3bdab"/><path d="M38.500 45.900 H60 V55 H34Z" fill="#bbb4a2"/></g>
<g clip-path="url(#ivm)"><rect x="10" y="10" width="40" height="40" fill="#fafaf7" opacity=".5"/><path d="M20 30 L29.200 16.700 L35 24 L38 21 L46 36 L36 40Z" fill="#e4e3dc" opacity=".8"/><path d="M12.800 46 L23.500 24.200 L29.900 33.400 L32.400 29.200 L42.700 46Z" fill="#ffffff"/></g>
<circle cx="28.800" cy="28.500" r="15" fill="none" stroke="#5a5a5a" stroke-width="2.100"/>
<path d="M39.800 39.500 L42 41.700" stroke="#9c9c9c" stroke-width="2.600"/>
<path d="M41.200 40.900 L49.500 49.200" stroke="#3a3a3a" stroke-width="4.300" stroke-linecap="butt"/>
</svg></div>
<div class="ic" style="left:499px;top:590px"><svg width="64" height="64" viewBox="0 0 64 64">
<defs><clipPath id="lgc"><rect x="4" y="10" width="56" height="44" rx="4.500"/></clipPath></defs>
<g clip-path="url(#lgc)"><rect x="4" y="10" width="28" height="44" fill="#f6f5f2"/><rect x="32" y="10" width="28" height="22" fill="#3584e4"/><rect x="32" y="32" width="28" height="22" fill="#4a90e4"/><rect x="4" y="52" width="28" height="2" fill="#e9e7e2"/></g>
<text opacity=".99" x="17.600" y="40.700" font-family="Liberation Sans,sans-serif" font-size="25" fill="#77767b" text-anchor="middle">A</text>
<text opacity=".99" x="46.800" y="38.700" font-family="Noto Sans CJK SC,Noto Sans CJK JP,WenQuanYi Zen Hei,sans-serif" font-weight="500" font-size="20" fill="#ffffff" text-anchor="middle">文</text>
</svg></div>
<div class="ic" style="left:647px;top:590px"><svg width="64" height="64" viewBox="0 0 64 64">
<defs><clipPath id="lo1"><path d="M14.500 4 H33.900 Q35.700 4 36.900 5.200 L52.800 21 Q54 22.200 54 24 V55.500 A4.500 4.500 0 0 1 49.500 60 H14.500 A4.500 4.500 0 0 1 10 55.500 V8.500 A4.500 4.500 0 0 1 14.500 4Z"/></clipPath></defs>
<g clip-path="url(#lo1)"><rect x="10" y="4" width="22" height="28" fill="#545454"/><rect x="32" y="4" width="22" height="28" fill="#626262"/><rect x="10" y="32" width="22" height="28" fill="#707070"/><rect x="32" y="32" width="22" height="28" fill="#7a7a7a"/><path d="M54 48 V60 H42Z" fill="#8a8a8a"/></g>
<path d="M45 4 H50.900 A3.100 3.100 0 0 1 54 7.100 V14.100 Q54 15.900 52.700 14.700 L43.900 5.800 Q42.800 4 45 4Z" fill="#6a6a6a"/>
</svg></div>
<div class="ic" style="left:795px;top:590px"><svg width="64" height="64" viewBox="0 0 64 64">
<defs><clipPath id="lo6"><path d="M14.500 4 H33.900 Q35.700 4 36.900 5.200 L52.800 21 Q54 22.200 54 24 V55.500 A4.500 4.500 0 0 1 49.500 60 H14.500 A4.500 4.500 0 0 1 10 55.500 V8.500 A4.500 4.500 0 0 1 14.500 4Z"/></clipPath></defs>
<g clip-path="url(#lo6)"><rect x="10" y="4" width="22" height="28" fill="#117000"/><rect x="32" y="4" width="22" height="28" fill="#2a871f"/><rect x="10" y="32" width="22" height="28" fill="#2b961a"/><rect x="32" y="32" width="22" height="28" fill="#3aa52e"/><path d="M54 48 V60 H42Z" fill="#52b346"/></g>
<path d="M45 4 H50.900 A3.100 3.100 0 0 1 54 7.100 V14.100 Q54 15.900 52.700 14.700 L43.900 5.800 Q42.800 4 45 4Z" fill="#2a8a1c"/>

<defs><linearGradient id="lcg" x1="0" y1="0" x2="0" y2="1"><stop offset="0" stop-color="#3a9a30"/><stop offset="1" stop-color="#54b548"/></linearGradient>
<linearGradient id="lch" x1="0" y1="0" x2="0" y2="1"><stop offset="0" stop-color="#2f7f28"/><stop offset="1" stop-color="#4aa83f"/></linearGradient>
<clipPath id="lcc"><rect x="18.200" y="24.200" width="27.300" height="25.200" rx="4.200"/></clipPath></defs>
<rect x="18.200" y="24.200" width="27.300" height="25.200" rx="4.200" fill="url(#lcg)"/>
<rect clip-path="url(#lcc)" x="18.200" y="24.200" width="27.300" height="5" fill="#80da72"/>
<rect x="18.200" y="24.200" width="27.300" height="25.200" rx="4.200" fill="none" stroke="#ffffff" stroke-width="1.200"/>
<g stroke="#ffffff" stroke-width="1.100" fill="none"><path d="M18.200 29.200 H45.500 M18.200 34.200 H45.500 M18.200 39.200 H45.500 M18.200 44.300 H45.500 M27.300 24.200 V49.400 M36.400 24.200 V49.400"/></g>
<rect x="35.500" y="38.800" width="12.200" height="12" rx="2.200" fill="url(#lch)" stroke="#ffffff" stroke-width="1.200"/>
<g stroke="#ffffff" stroke-width="1.500"><path d="M38.400 49 V43.500 M41.600 49 V41.200 M44.700 49 V46.200"/></g>
</svg></div>
<div class="ic" style="left:943px;top:590px"><svg width="64" height="64" viewBox="0 0 64 64">
<defs><clipPath id="lo3"><path d="M14.500 4 H33.900 Q35.700 4 36.900 5.200 L52.800 21 Q54 22.200 54 24 V55.500 A4.500 4.500 0 0 1 49.500 60 H14.500 A4.500 4.500 0 0 1 10 55.500 V8.500 A4.500 4.500 0 0 1 14.500 4Z"/></clipPath></defs>
<g clip-path="url(#lo3)"><rect x="10" y="4" width="22" height="28" fill="#d8942a"/><rect x="32" y="4" width="22" height="28" fill="#e1a43f"/><rect x="10" y="32" width="22" height="28" fill="#e8b040"/><rect x="32" y="32" width="22" height="28" fill="#efbf55"/><path d="M54 48 V60 H42Z" fill="#f6d272"/></g>
<path d="M45 4 H50.900 A3.100 3.100 0 0 1 54 7.100 V14.100 Q54 15.900 52.700 14.700 L43.900 5.800 Q42.800 4 45 4Z" fill="#dfa038"/>

<circle cx="26.200" cy="33.300" r="8.800" fill="#ecb144" stroke="#ffffff" stroke-width="1.100"/>
<rect x="33.400" y="29.600" width="13.300" height="13.700" rx="3" fill="#eba824" stroke="#ffffff" stroke-width="1.100"/>
<path d="M27.400 37.300 Q28.800 35.200 30.200 37.300 L36.800 47.300 Q37.800 49.400 35.600 49.500 H22 Q19.800 49.400 20.800 47.300Z" fill="#e6a212" stroke="#ffffff" stroke-width="1.100" stroke-linejoin="round"/>
</svg></div>
<div class="ic" style="left:1091px;top:590px"><svg width="64" height="64" viewBox="0 0 64 64">
<defs><clipPath id="lo7"><path d="M14.500 4 H33.900 Q35.700 4 36.900 5.200 L52.800 21 Q54 22.200 54 24 V55.500 A4.500 4.500 0 0 1 49.500 60 H14.500 A4.500 4.500 0 0 1 10 55.500 V8.500 A4.500 4.500 0 0 1 14.500 4Z"/></clipPath></defs>
<g clip-path="url(#lo7)"><rect x="10" y="4" width="22" height="28" fill="#a8400a"/><rect x="32" y="4" width="22" height="28" fill="#bd5a24"/><rect x="10" y="32" width="22" height="28" fill="#c96028"/><rect x="32" y="32" width="22" height="28" fill="#db7743"/><path d="M54 48 V60 H42Z" fill="#e6906a"/></g>
<path d="M45 4 H50.900 A3.100 3.100 0 0 1 54 7.100 V14.100 Q54 15.900 52.700 14.700 L43.900 5.800 Q42.800 4 45 4Z" fill="#bf5a26"/>

<rect x="17.800" y="24.900" width="28.500" height="20.600" rx="4.300" fill="#e8925e" fill-opacity=".55" stroke="#ffffff" stroke-width="1.600"/>
<path d="M21 29 H43" stroke="#ffffff" stroke-width="2"/>
<g fill="#ffffff"><rect x="21" y="33" width="2.300" height="2.200" rx=".5"/><rect x="21" y="36.700" width="2.300" height="2.200" rx=".5"/><rect x="21" y="40.400" width="2.300" height="2.200" rx=".5"/><rect x="25.200" y="33.300" width="5.800" height="1.600"/><rect x="25.200" y="37" width="5.800" height="1.600"/><rect x="25.200" y="40.700" width="5.800" height="1.600"/>
<rect x="33.400" y="33.100" width="9.600" height="9.600" rx="1.800"/></g>
<path d="M35.200 40.600 L37.400 37 L39 38.600 L41.600 34.800" stroke="#d06c3a" stroke-width="1.300" fill="none"/>
<path d="M25.400 51 L32 46.300 L38.600 51" stroke="#ffffff" stroke-width="1.900" fill="none"/>
</svg></div>
<div class="ic" style="left:351px;top:735px"><svg width="64" height="64" viewBox="0 0 64 64">
<defs><clipPath id="lo8"><path d="M14.500 4 H33.900 Q35.700 4 36.900 5.200 L52.800 21 Q54 22.200 54 24 V55.500 A4.500 4.500 0 0 1 49.500 60 H14.500 A4.500 4.500 0 0 1 10 55.500 V8.500 A4.500 4.500 0 0 1 14.500 4Z"/></clipPath></defs>
<g clip-path="url(#lo8)"><rect x="10" y="4" width="22" height="28" fill="#b00f2f"/><rect x="32" y="4" width="22" height="28" fill="#c12947"/><rect x="10" y="32" width="22" height="28" fill="#cf2e57"/><rect x="32" y="32" width="22" height="28" fill="#d84068"/><path d="M54 48 V60 H42Z" fill="#e2557f"/></g>
<path d="M45 4 H50.900 A3.100 3.100 0 0 1 54 7.100 V14.100 Q54 15.900 52.700 14.700 L43.900 5.800 Q42.800 4 45 4Z" fill="#c72e51"/>

<g stroke="#fbe4ea" stroke-width="0.900" fill="none"><path d="M15.300 28.300 H48.700 M15.300 50.700 H48.700 M17.500 25.300 V53.700 M46.700 25.300 V53.700"/></g>
<path d="M20.600 39.800 H23.600 L26.100 46.400 H27.100 L28.800 32.500 H43.100 V34.300" stroke="#ffffff" stroke-width="2.200" fill="none" stroke-linejoin="miter" stroke-miterlimit="2"/>
<path d="M31.700 37.400 L41.600 47.300 M41.600 37.400 L31.700 47.300" stroke="#ffffff" stroke-width="2.500" fill="none"/>
</svg></div>
<div class="ic" style="left:499px;top:735px"><svg width="64" height="64" viewBox="0 0 64 64">
<defs><linearGradient id="pwg" x1="0" y1="0" x2="0" y2="1"><stop offset="0" stop-color="#e9e9e9"/><stop offset="1" stop-color="#f7f7f7"/></linearGradient><clipPath id="pwc"><rect x="4" y="10" width="56" height="44" rx="4.500"/></clipPath></defs>
<rect x="4" y="10" width="56" height="44" rx="4.500" fill="url(#pwg)"/>
<g clip-path="url(#pwc)" fill="none" stroke-width="0.900">
<path d="M4 20.700 H10 C17 20.700 17 31 20 39 C23 47 25 46.700 27.300 46.700 H33 C40 46.700 40 30 41.500 22 C43 14 46 14 47.500 19 C49.500 26 51.500 35.700 54.300 35.700 C57 35.700 56.500 26.200 60 26.200" stroke="#4a9ee6"/>
<path d="M4 36.200 C7 36.200 8 27 10.700 27 C14 27 15.500 47 19.800 47 C25 47 24 16.700 30 16.700 H37 C42 16.700 42 33.300 45.700 33.300 C47.500 33.300 48 30.300 49.500 30.300 C52.500 30.300 53 42 57.500 42 H60" stroke="#e4506e"/></g>
</svg></div>
<div class="ic" style="left:647px;top:735px"><svg width="64" height="64" viewBox="0 0 64 64">
<circle cx="32.200" cy="31" r="29.300" fill="#f4f2ee"/>
<path d="M11.76 40.85 A22.60 22.60 0 0 1 50.00 17.14" fill="none" stroke="#4a92e4" stroke-width="4.80"/><path d="M51.77 19.84 A22.60 22.60 0 0 1 14.00 44.46" fill="none" stroke="#26a66c" stroke-width="4.80"/>
<path d="M20.300 18.300 L35 27.300 L20.300 36.700 V30.700 L26.200 27.300 L20.300 24Z" fill="#26a66c"/>
<path d="M42.800 25.300 L28.300 34.500 L42.800 43.700 V37.800 L37 34.500 L42.800 31.200Z" fill="#4a8ee2"/>
</svg></div>
<div class="ic" style="left:795px;top:735px"><svg width="64" height="64" viewBox="0 0 64 64">
<defs><linearGradient id="swg" x1="0" y1="0" x2="0" y2="1"><stop offset="0" stop-color="#2669a8"/><stop offset="1" stop-color="#42ade9"/></linearGradient><clipPath id="swc"><rect x="9" y="8.700" width="46.200" height="41.300" rx="2.500"/></clipPath></defs>
<rect x="4" y="4" width="56" height="56" rx="4.500" fill="#f6f5f4"/>
<rect x="9" y="8.700" width="46.200" height="41.300" rx="2.500" fill="url(#swg)"/>
<g clip-path="url(#swc)"><path d="M9 8.700 L55.200 50 H9Z" fill="#2f8fd8" opacity=".22"/>
<circle cx="24.800" cy="46.200" r="10" fill="#a9defa"/>
<rect x="9" y="46.200" width="46.200" height="4" fill="#091a2c"/>
<path d="M30.700 46.500 L31.400 35.500 L28.800 29.500 L22.500 25.300 L18.500 24.500 L13.700 25.200 L18.800 23.100 L23.500 23.500 L27.500 26 L25 20.500 L21 15.300 L26.800 19.500 L29.800 24.500 L32.200 30.500 L33.600 33 L40 28.300 L45 26 L50.700 25.300 L45.500 27.700 L41 30.700 L35.800 36.500 L35.800 46.500Z" fill="#06121f" stroke="#06121f" stroke-width="0.500" stroke-linejoin="round"/>
<path d="M33.600 33 L33.600 46.500 L35.800 46.500 L35.800 36.500Z" fill="#12304e" opacity=".8"/></g>
</svg></div>
<div class="ic" style="left:943px;top:735px"><svg width="64" height="64" viewBox="0 0 64 64">
<defs><linearGradient id="sug" x1="0" y1="0" x2="0" y2="1"><stop offset="0" stop-color="#145c9a"/><stop offset="0.5" stop-color="#1f82cc"/><stop offset="1" stop-color="#2ba2ea"/></linearGradient>
<clipPath id="suc"><circle cx="32" cy="32" r="28"/></clipPath></defs>
<circle cx="32" cy="32" r="28" fill="url(#sug)"/>
<g clip-path="url(#suc)" opacity=".4"><path d="M50.36 29.04 L55.71 29.98 L55.71 34.02 L50.36 34.96 L49.38 38.61 L53.55 42.11 L51.53 45.61 L46.42 43.75 L43.75 46.42 L45.61 51.53 L42.11 53.55 L38.61 49.38 L34.96 50.36 L34.02 55.71 L29.98 55.71 L29.04 50.36 L25.39 49.38 L21.89 53.55 L18.39 51.53 L20.25 46.42 L17.58 43.75 L12.47 45.61 L10.45 42.11 L14.62 38.61 L13.64 34.96 L8.29 34.02 L8.29 29.98 L13.64 29.04 L14.62 25.39 L10.45 21.89 L12.47 18.39 L17.58 20.25 L20.25 17.58 L18.39 12.47 L21.89 10.45 L25.39 14.62 L29.04 13.64 L29.98 8.29 L34.02 8.29 L34.96 13.64 L38.61 14.62 L42.11 10.45 L45.61 12.47 L43.75 17.58 L46.42 20.25 L51.53 18.39 L53.55 21.89 L49.38 25.39Z" fill="#7ccaf8" stroke="#7ccaf8" stroke-width="1.00" stroke-linejoin="round" /><circle cx="32" cy="32" r="19" fill="#7ccaf8"/></g>
<circle cx="32" cy="32" r="13.500" fill="#1d7ec8"/>
<path d="M29.900 13.500 H34.100 L47.300 44.400 H40.900 L32 21.300 L23.100 44.400 H16.700Z" fill="#ffffff"/>
<path d="M32 13.500 H34.100 L47.300 44.400 H40.900 L32 21.300Z" fill="#d7e1ea"/>
<rect x="14.900" y="31.600" width="34.200" height="5.700" rx="2.850" fill="#ffffff"/>
<rect x="17" y="33.400" width="30" height="2.200" rx="1.100" fill="#a6d6f3"/>
</svg></div>
<div class="ic" style="left:1091px;top:735px"><svg width="64" height="64" viewBox="0 0 64 64">
<defs><linearGradient id="spd" x1="0" y1="0" x2="0" y2="1"><stop offset="0" stop-color="#575757"/><stop offset="1" stop-color="#6c6c6c"/></linearGradient></defs>
<circle cx="32" cy="32" r="28.100" fill="#eeeeee"/>
<circle cx="32" cy="32" r="21.700" fill="url(#spd)"/>
<g id="spn" fill="#3e3e3e"><path d="M10.200 14.700 L14.900 10 L15.800 14.700Z"/><path d="M10.700 17.700 L16.200 18.800 L14.600 16.300 L10.200 16.200Z"/></g>
<use href="#spn" transform="rotate(180 32 32)"/>
<path d="M29.900 13.500 H34.100 L47.300 44.400 H40.900 L32 21.300 L23.100 44.400 H16.700Z" fill="#f1f1f1"/>
<path d="M32 13.500 H34.100 L47.300 44.400 H40.900 L32 21.300Z" fill="#d7d7d7"/>
<rect x="14.900" y="31.600" width="34.200" height="5.700" rx="2.850" fill="#f3f3f3"/>
<rect x="17" y="33.400" width="30" height="2.200" rx="1.100" fill="#c9c9c9"/>
<rect x="17" y="33.400" width="20" height="2.200" rx="1.100" fill="#e95420"/>
</svg></div>
<span class="t" id="t_clocks" style="left:362.12px;top:370.00px;letter-spacing:-0.180px">Clocks</span>
<span class="t" id="t_videos" style="left:508.13px;top:370.00px;letter-spacing:0.522px">Videos</span>
<span class="t" id="t_calculator" style="left:644.12px;top:370.00px;letter-spacing:0.270px">Calculator</span>
<span class="t" id="t_docscan" style="left:783.13px;top:370.00px;letter-spacing:0.280px">Document …</span>
<span class="t" id="t_settings" style="left:948.11px;top:370.00px;letter-spacing:0.257px">Settings</span>
<span class="t" id="t_sysmon" style="left:1079.14px;top:370.00px;letter-spacing:-0.040px">System Mo…</span>
<span class="t" id="t_terminal" style="left:355.06px;top:515.00px;letter-spacing:0.373px">Terminal</span>
<span class="t" id="t_utilities" style="left:505.14px;top:515.00px;letter-spacing:0.687px">Utilities</span>
<span class="t" id="t_drivers1" style="left:645.02px;top:515.00px;letter-spacing:0.740px">Additional</span>
<span class="t" id="t_drivers2" style="left:656.15px;top:533.00px;letter-spacing:0.210px">Drivers</span>
<span class="t" id="t_calendar" style="left:797.13px;top:515.00px;letter-spacing:0.013px">Calendar</span>
<span class="t" id="t_camera" style="left:949.16px;top:515.00px;letter-spacing:-0.180px">Camera</span>
<span class="t" id="t_firmware" style="left:1079.14px;top:515.00px;letter-spacing:0.280px">Firmware …</span>
<span class="t" id="t_iv1" style="left:362.23px;top:660.00px;letter-spacing:0.387px">Image</span>
<span class="t" id="t_iv2" style="left:360.08px;top:678.00px;letter-spacing:0.414px">Viewer</span>
<span class="t" id="t_language" style="left:487.16px;top:660.00px;letter-spacing:-0.200px">Language …</span>
<span class="t" id="t_lo" style="left:641.13px;top:660.00px;letter-spacing:0.504px">LibreOffice</span>
<span class="t" id="t_localc" style="left:783.13px;top:660.00px;letter-spacing:0.585px">LibreOffic…</span>
<span class="t" id="t_lodraw" style="left:931.15px;top:660.00px;letter-spacing:0.522px">LibreOffic…</span>
<span class="t" id="t_loimpress" style="left:1079.14px;top:660.00px;letter-spacing:0.522px">LibreOffic…</span>
<span class="t" id="t_lomath1" style="left:346.14px;top:805.00px;letter-spacing:0.441px">LibreOffice</span>
<span class="t" id="t_lomath2" style="left:366.13px;top:823.00px;letter-spacing:1.200px">Math</span>
<span class="t" id="t_power" style="left:487.16px;top:805.00px;letter-spacing:0.160px">Power Sta…</span>
<span class="t" id="t_remmina" style="left:647.17px;top:805.00px;letter-spacing:-0.090px">Remmina</span>
<span class="t" id="t_shotwell" style="left:798.15px;top:805.00px;letter-spacing:0.488px">Shotwell</span>
<span class="t" id="t_swu1" style="left:938.15px;top:805.00px;letter-spacing:0.320px">Software &amp;</span>
<span class="t" id="t_swu2" style="left:946.22px;top:823.00px;letter-spacing:0.480px">Updates</span>
<span class="t" id="t_swupdater" style="left:1079.14px;top:805.00px;letter-spacing:0.490px">Software …</span>
<span class="t" id="t_clock" style="left:709.20px;top:6.30px;letter-spacing:-0.300px">Sep 14  14:39</span>
<span class="t" id="t_searchtxt" style="left:609.50px;top:67.70px;letter-spacing:0.069px">Type to search</span>
<div id="chev"><svg width="24" height="32" viewBox="0 0 24 32"><path d="M8.300 4.800 L15 16.200 L8.300 27.200" fill="none" stroke="#f2f2f2" stroke-width="1.300" stroke-linejoin="round" stroke-linecap="round"/></svg></div>
<div class="dot" style="left:731px;top:878px;width:10px;height:10px;background:#f2f2f2"></div>
<div class="dot" style="left:767px;top:880px;width:6px;height:6px;background:#8a8a8a"></div>
</body></html>
